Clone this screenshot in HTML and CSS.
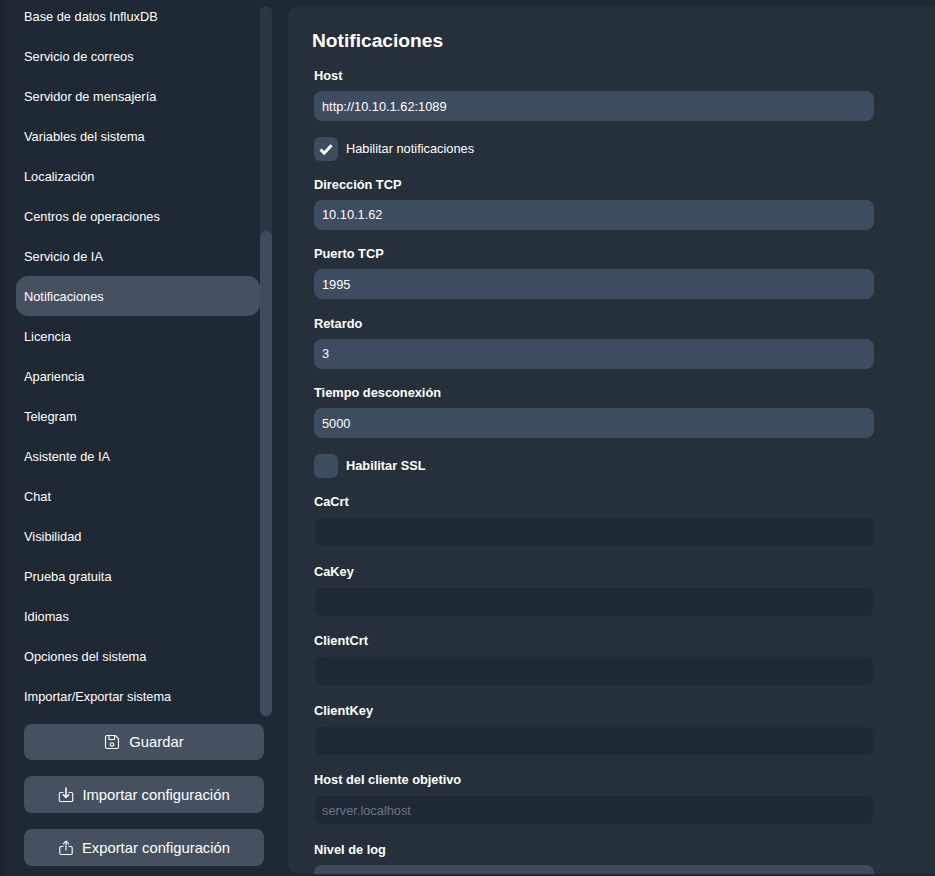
FILE: index.html
```html
<!DOCTYPE html>
<html lang="es">
<head>
<meta charset="utf-8">
<title>Notificaciones</title>
<link rel="stylesheet" href="styles.css">
</head>
<body>
<div class="app">
  <aside class="sidebar">
    <div class="nav-wrap">
      <nav class="nav">
        <a class="nav-item">Base de datos InfluxDB</a>
        <a class="nav-item">Servicio de correos</a>
        <a class="nav-item">Servidor de mensajería</a>
        <a class="nav-item">Variables del sistema</a>
        <a class="nav-item">Localización</a>
        <a class="nav-item">Centros de operaciones</a>
        <a class="nav-item">Servicio de IA</a>
        <a class="nav-item active">Notificaciones</a>
        <a class="nav-item">Licencia</a>
        <a class="nav-item">Apariencia</a>
        <a class="nav-item">Telegram</a>
        <a class="nav-item">Asistente de IA</a>
        <a class="nav-item">Chat</a>
        <a class="nav-item">Visibilidad</a>
        <a class="nav-item">Prueba gratuita</a>
        <a class="nav-item">Idiomas</a>
        <a class="nav-item">Opciones del sistema</a>
        <a class="nav-item">Importar/Exportar sistema</a>
      </nav>
      <div class="scrollbar"><div class="thumb"></div></div>
    </div>
    <div class="actions">
      <button class="btn btn-save">
        <svg class="icon" viewBox="0 0 16 16" fill="none" stroke="currentColor" stroke-width="1.1" stroke-linejoin="round"><path d="M3 1.500h8.300L14.500 4.700v8.300a1.500 1.500 0 0 1-1.500 1.500H3A1.500 1.500 0 0 1 1.500 13V3A1.500 1.500 0 0 1 3 1.500z"/><path d="M5 1.500v4h5.500v-4"/><circle cx="8" cy="10.500" r="1.700"/></svg>
        <span>Guardar</span>
      </button>
      <button class="btn">
        <svg class="icon" viewBox="0 0 16 16" fill="none" stroke="currentColor" stroke-width="1.1" stroke-linecap="round" stroke-linejoin="round"><path d="M5 5.500H2.500A1.200 1.200 0 0 0 1.300 6.700v6.600a1.200 1.200 0 0 0 1.200 1.200h11a1.200 1.200 0 0 0 1.200-1.200V6.700a1.200 1.200 0 0 0-1.200-1.200H11"/><path d="M8 1v9" stroke-width="1.500"/><path d="M5.300 7.700 8 10.400l2.700-2.700" stroke-width="1.500"/></svg>
        <span>Importar configuración</span>
      </button>
      <button class="btn">
        <svg class="icon" viewBox="0 0 16 16" fill="none" stroke="currentColor" stroke-width="1.1" stroke-linecap="round" stroke-linejoin="round"><path d="M5 6.500H3A1.200 1.200 0 0 0 1.800 7.700v5.600A1.200 1.200 0 0 0 3 14.500h10a1.200 1.200 0 0 0 1.200-1.200V7.700A1.200 1.200 0 0 0 13 6.500h-2"/><path d="M8 10V1.200"/><path d="M5.300 3.800 8 1.100l2.700 2.700"/></svg>
        <span>Exportar configuración</span>
      </button>
    </div>
  </aside>
  <main class="panel">
    <h1 class="title">Notificaciones</h1>
    <form class="form">
      <div class="field"><label class="label">Host</label><input class="input" value="http://10.10.1.62:1089"></div>
      <label class="check"><span class="box"><svg viewBox="0 0 16 16" class="tick"><path d="M2.500 8.500 6.200 12.200 13.500 4.300" fill="none" stroke="currentColor" stroke-width="3"/></svg></span><span>Habilitar notificaciones</span></label>
      <div class="field"><label class="label">Dirección TCP</label><input class="input" value="10.10.1.62"></div>
      <div class="field"><label class="label">Puerto TCP</label><input class="input" value="1995"></div>
      <div class="field"><label class="label">Retardo</label><input class="input" value="3"></div>
      <div class="field"><label class="label">Tiempo desconexión</label><input class="input" value="5000"></div>
      <label class="check"><span class="box"></span><span class="bold">Habilitar SSL</span></label>
      <div class="field"><label class="label">CaCrt</label><input class="input dark"></div>
      <div class="field"><label class="label">CaKey</label><input class="input dark"></div>
      <div class="field"><label class="label">ClientCrt</label><input class="input dark"></div>
      <div class="field"><label class="label">ClientKey</label><input class="input dark"></div>
      <div class="field"><label class="label">Host del cliente objetivo</label><input class="input dark" placeholder="server.localhost"></div>
      <div class="field"><label class="label">Nivel de log</label><div class="input select"></div></div>
    </form>
  </main>
</div>
</body>
</html>
```

FILE: styles.css
```css
* { box-sizing: border-box; }
html, body { margin: 0; height: 100%; overflow: hidden; }
body {
  background: #1f2933;
  color: #fff;
  font-family: "Liberation Sans", Arial, sans-serif;
  font-size: 12.8px;
}
.app { display: flex; height: 876px; overflow: hidden; }
.sidebar {
  width: 288px;
  flex: none;
  display: flex;
  flex-direction: column;
  background: linear-gradient(90deg, #1b242d 0, #1f2933 12px);
}
.nav-wrap {
  display: flex;
  height: 716px;
  margin-bottom: 8px;
  padding-left: 16px;
  overflow: hidden;
  flex: none;
}
.nav { width: 244px; flex: none; margin-top: -4px; }
.nav-item {
  display: flex;
  align-items: center;
  height: 40px;
  padding-left: 8px;
  border-radius: 12px;
  color: #fff;
}
.nav-item.active { background: #46515f; }
.scrollbar {
  width: 12px;
  flex: none;
  margin-top: 6px;
  background: #2b3642;
  border-radius: 6px;
  padding-top: 225px;
}
.thumb { height: 485px; background: #3e4c5c; border-radius: 6px; }
.actions { display: flex; flex-direction: column; padding: 0 24px; }
.btn {
  display: flex;
  align-items: center;
  justify-content: center;
  gap: 8px;
  height: 37px;
  margin-bottom: 16px;
  border: 0;
  border-radius: 8px;
  background: #46515f;
  color: #fff;
  font: 14.8px "Liberation Sans", Arial, sans-serif;
}
.btn-save { height: 36px; gap: 9px; }
.icon { width: 16px; height: 16px; flex: none; }
.panel {
  flex: 1;
  margin-top: 6px;
  height: 868px;
  padding: 22px 26px 0;
  background: #26303b;
  border-radius: 12px 0 0 12px;
  overflow: hidden;
}
.title { margin: 0 0 12px -2px; padding-top: 1px; font-size: 19.2px; line-height: 24px; font-weight: 700; }
.form { width: 560px; }
.field { margin-bottom: 13.500px; }
.label { display: block; height: 26px; line-height: 22px; font-weight: 700; }
.input {
  display: block;
  width: 100%;
  height: 30px;
  padding: 0 8px;
  border: 0;
  border-radius: 8px;
  background: #3e4c5f;
  color: #fff;
  font: 12.8px "Liberation Sans", Arial, sans-serif;
  outline: 0;
}
.input.dark { background: #1f2933; border: 1px solid #26303b; padding: 0 7px; }
.input::placeholder { color: #6b7785; opacity: 1; }
.check {
  display: flex;
  align-items: center;
  gap: 8px;
  height: 24px;
  margin: 15.500px 0 13.400px;
}
.box {
  display: flex;
  align-items: center;
  justify-content: center;
  width: 24px;
  height: 24px;
  border-radius: 6px;
  background: #3e4c5f;
}
.tick { width: 16px; height: 16px; color: #fff; }
.bold { font-weight: 700; }
```
